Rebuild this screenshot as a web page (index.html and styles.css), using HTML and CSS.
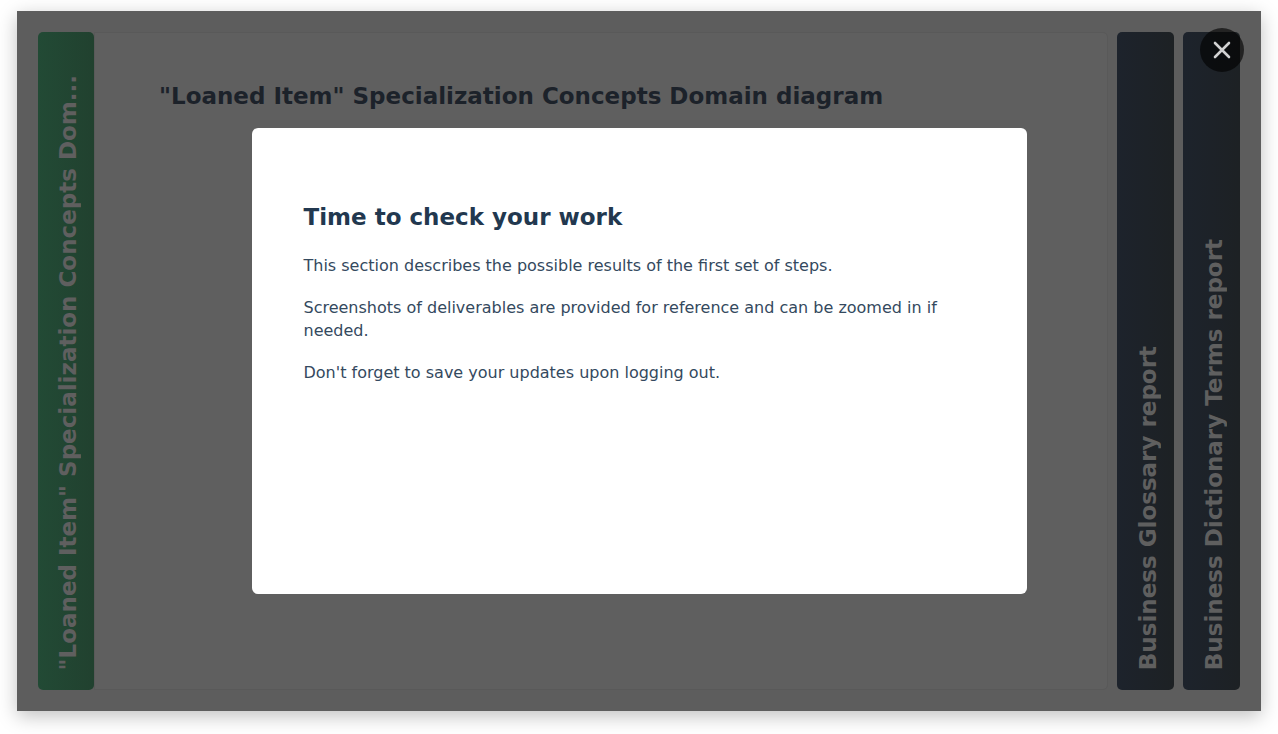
FILE: index.html
```html
<!DOCTYPE html>
<html lang="en">
<head>
<meta charset="utf-8">
<title>Time to check your work</title>
<link rel="stylesheet" href="styles.css">
</head>
<body>
<main class="stage">
  <div class="deck">
    <button class="tab tab-active" type="button"><span class="tab-label">"Loaned Item" Specialization Concepts Dom...</span></button>
    <section class="panel">
      <h2 class="title title-dim">"Loaned Item" Specialization Concepts Domain diagram</h2>
    </section>
    <button class="tab" type="button"><span class="tab-label">Business Glossary report</span></button>
    <button class="tab" type="button"><span class="tab-label">Business Dictionary Terms report</span></button>
  </div>
  <div class="overlay">
    <div class="modal" role="dialog" aria-labelledby="modal-title">
      <h2 class="title" id="modal-title">Time to check your work</h2>
      <p class="text">This section describes the possible results of the first set of steps.</p>
      <p class="text">Screenshots of deliverables are provided for reference and can be zoomed in if needed.</p>
      <p class="text">Don't forget to save your updates upon logging out.</p>
    </div>
  </div>
  <button class="close" type="button" aria-label="Close">
    <svg width="18" height="18" viewBox="0 0 18 18" fill="none" stroke="currentColor" stroke-width="2.6" stroke-linecap="round"><path d="M2 2L16 16M16 2L2 16"/></svg>
  </button>
</main>
</body>
</html>
```
FILE: styles.css
```css
* { box-sizing: border-box; }

body {
  margin: 0;
  min-height: 100vh;
  display: flex;
  padding: 11px 17px 23px;
  background: #fff;
  font-family: "DejaVu Sans", Verdana, sans-serif;
}

.stage {
  position: relative;
  flex: 1;
  display: flex;
  padding: 21px;
  background: #5d5d5d;
  box-shadow: 0 5px 18px rgba(0, 0, 0, 0.25);
}

.deck {
  flex: 1;
  display: flex;
  gap: 9px;
}

.tab {
  flex: none;
  width: 57px;
  display: flex;
  align-items: center;
  justify-content: flex-start;
  flex-direction: column-reverse;
  padding: 20px 0 20px 4px;
  border: 0;
  border-radius: 5px;
  background: linear-gradient(90deg, #1d232c, #1d2124);
  color: #5f5f5f;
  font: bold 23px/32px "DejaVu Sans", Verdana, sans-serif;
}

.tab-active {
  margin-right: -9px;
  width: 56px;
  background: linear-gradient(90deg, #224a35, #21412f);
}

.tab-label {
  writing-mode: vertical-rl;
  transform: rotate(180deg);
  white-space: nowrap;
}

.panel {
  flex: 1;
  padding: 47px 64px;
  border: 1px solid #595959;
  border-radius: 0 5px 5px 0;
  background: #5f5f5f;
}

.title {
  margin: 0 0 21px;
  color: #22384f;
  font-size: 23px;
  line-height: 32px;
}

.title-dim { color: #1c222a; }

.overlay {
  position: absolute;
  inset: 0;
  display: flex;
  align-items: center;
  justify-content: center;
}

.modal {
  width: 62.3%;
  height: 66.7%;
  padding: 73px 52px;
  border-radius: 6px;
  background: #fff;
}

.text {
  margin: 0 0 19px;
  color: #34495e;
  font-size: 16px;
  line-height: 23px;
}

.close {
  position: absolute;
  top: 17px;
  right: 17px;
  width: 44px;
  height: 44px;
  display: grid;
  place-items: center;
  padding: 0;
  border: 0;
  border-radius: 50%;
  background: rgba(0, 0, 0, 0.62);
  color: #d2d2d2;
}
```
